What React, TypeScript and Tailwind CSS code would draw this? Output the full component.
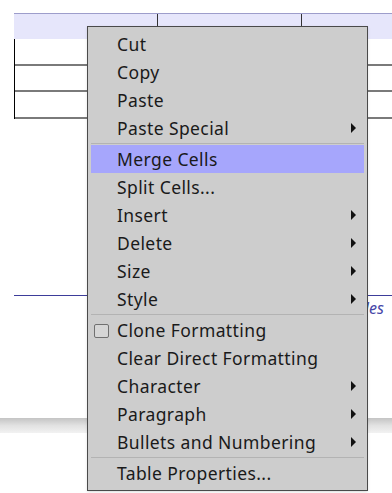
import React from "react";

type Item =
  | { kind: "item"; label: string; sub?: boolean; active?: boolean; check?: boolean }
  | { kind: "sep" };

const items: Item[] = [
  { kind: "item", label: "Cut" },
  { kind: "item", label: "Copy" },
  { kind: "item", label: "Paste" },
  { kind: "item", label: "Paste Special", sub: true },
  { kind: "sep" },
  { kind: "item", label: "Merge Cells", active: true },
  { kind: "item", label: "Split Cells..." },
  { kind: "item", label: "Insert", sub: true },
  { kind: "item", label: "Delete", sub: true },
  { kind: "item", label: "Size", sub: true },
  { kind: "item", label: "Style", sub: true },
  { kind: "sep" },
  { kind: "item", label: "Clone Formatting", check: true },
  { kind: "item", label: "Clear Direct Formatting" },
  { kind: "item", label: "Character", sub: true },
  { kind: "item", label: "Paragraph", sub: true },
  { kind: "item", label: "Bullets and Numbering", sub: true },
  { kind: "sep" },
  { kind: "item", label: "Table Properties..." },
];

function Arrow() {
  return (
    <svg width="5" height="10" viewBox="0 0 5 10" className="block -mt-[2px]">
      <path d="M0 0 L5 5 L0 10 Z" fill="#111" />
    </svg>
  );
}

export default function App() {
  return (
    <div
      className="relative w-[392px] h-[493px] bg-white overflow-hidden"
      style={{ fontFamily: '"Noto Sans", "Open Sans", sans-serif' }}
    >
      {/* background document */}
      <div className="pt-[13px] pl-[14px]">
        <div className="w-[400px]">
          <div className="h-[26px] bg-[#e6e6fb] border-t border-[#9d9dcb] flex">
            <div className="w-[144px] border-r border-[#333]" />
            <div className="w-[144px] border-r border-[#333]" />
            <div className="flex-1" />
          </div>
          <div className="border-l border-black">
            <div className="h-[27px] border-b-2 border-[#7a7a7a]" />
            <div className="h-[26px] border-b-2 border-[#7a7a7a]" />
            <div className="h-[27px] border-b-2 border-[#7a7a7a]" />
          </div>
        </div>
        <div className="mt-[176px] h-px bg-[#3d3d9a]" />
        <div className="pl-[330px] mt-[2px] text-[16px] italic text-[#4646a8] leading-[20px]">Styles</div>
      </div>
      <div className="mt-[100px] h-[15px] bg-gradient-to-b from-[#c4c4c4] via-[#e2e2e2] to-[#f2f2f2]" />

      {/* context menu */}
      <div className="absolute left-[87px] top-[26px] w-[281px] bg-[#cdcdcd] border border-[#4a4a4a] p-[3px] shadow-sm">
        {items.map((it, i) =>
          it.kind === "sep" ? (
            <div key={i} className="h-[3px] flex items-center">
              <div className="h-px w-full bg-[#b3b3b3]" />
            </div>
          ) : (
            <div
              key={i}
              className={`relative h-[28px] flex items-center pt-[2px] pl-[26px] pr-[8px] text-[17.5px] tracking-[0.4px] text-[#1a1a1a] ${
                it.active ? "bg-[#a6a6fc]" : ""
              }`}
            >
              {it.check && (
                <div className="absolute left-[3px] top-[8px] w-[15px] h-[14px] rounded-[2px] border border-[#707070] bg-[#d6d6d6]" />
              )}
              <span className="flex-1 leading-none">{it.label}</span>
              {it.sub && <Arrow />}
            </div>
          )
        )}
      </div>
    </div>
  );
}
